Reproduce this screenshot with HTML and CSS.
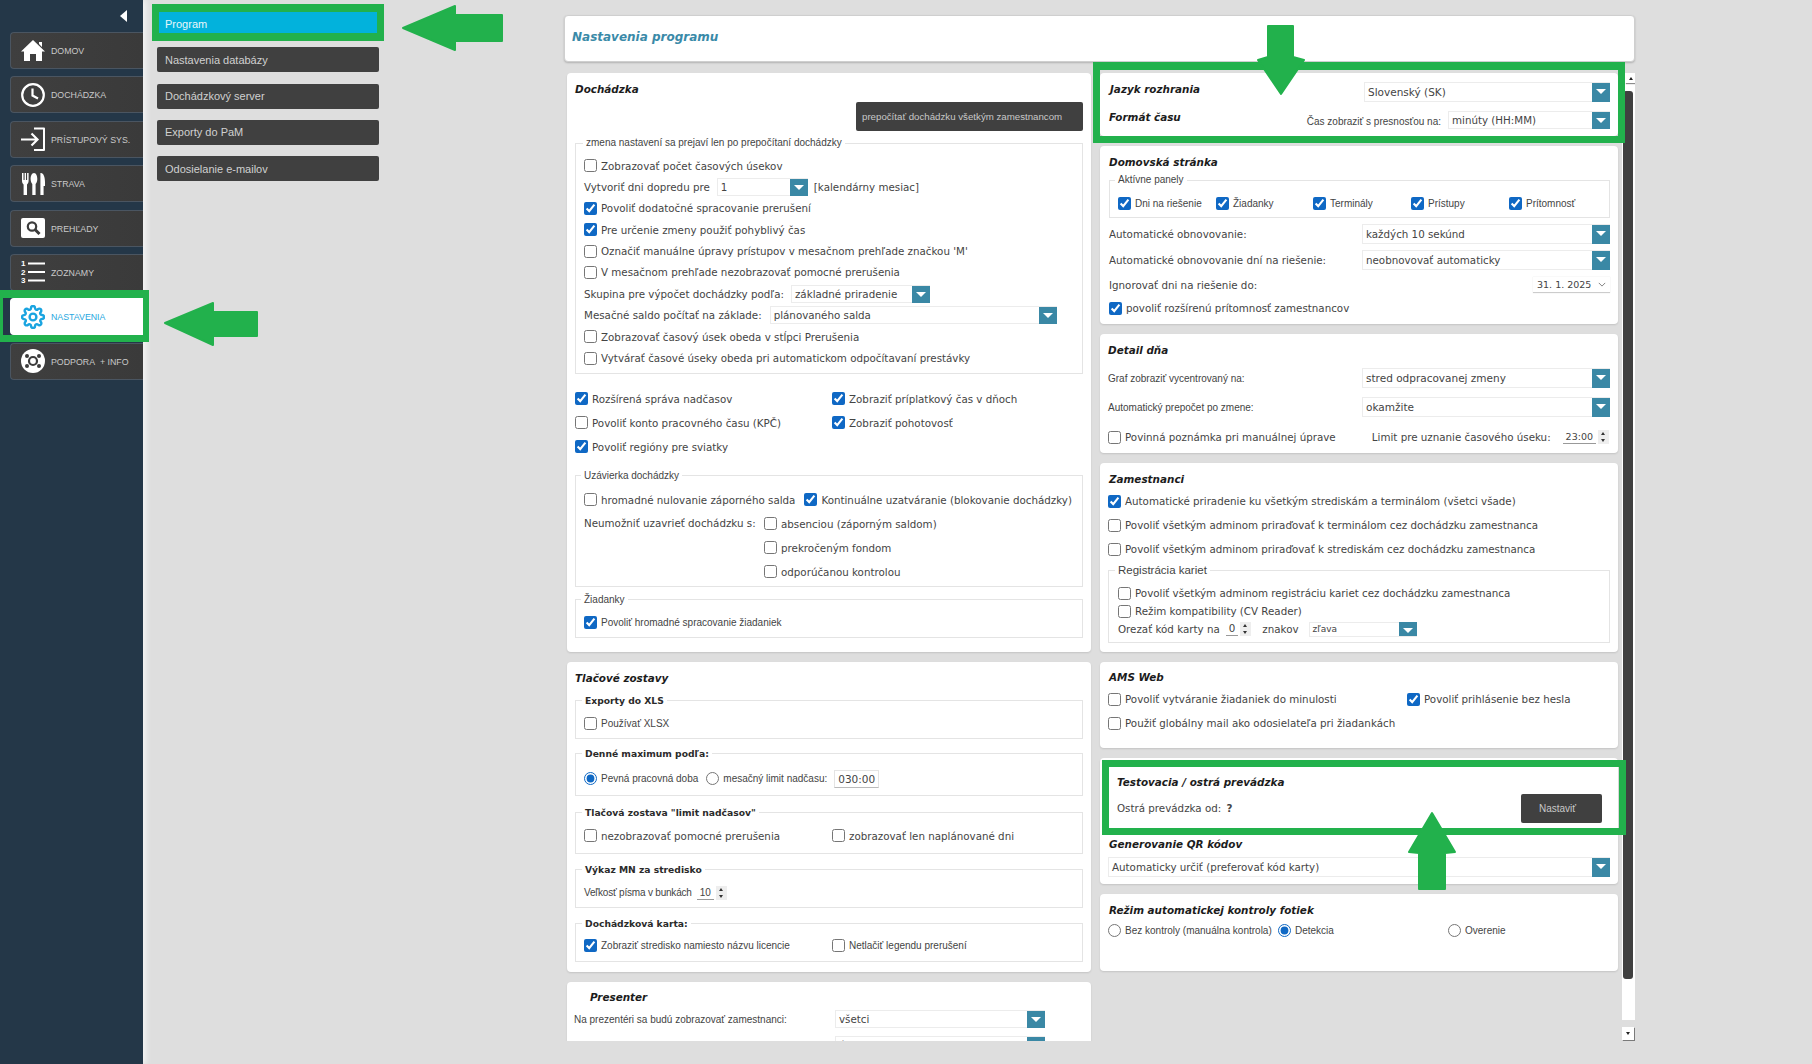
FILE: index.html
```html
<!DOCTYPE html>
<html lang="sk">
<head>
<meta charset="utf-8">
<title>Nastavenia programu</title>
<link rel="stylesheet" href="styles.css">
</head>
<body>
<div class="app">
  <nav class="sidebar">
    <div class="collapse"></div>
    <a class="nav"><svg class="ico" viewBox="0 0 24 24"><path fill="#fff" d="M12 1 24 12.5H21V22H15V15H9V22H3V12.5H0L12 1ZM18 3H21V8L18 5Z"/></svg><span>DOMOV</span></a>
    <a class="nav"><svg class="ico" viewBox="0 0 24 24"><circle cx="12" cy="12" r="10.8" fill="none" stroke="#fff" stroke-width="2.2"/><path d="M11.5 5.5V12.5L17 15.5" fill="none" stroke="#fff" stroke-width="2.2"/></svg><span>DOCHÁDZKA</span></a>
    <a class="nav"><svg class="ico" viewBox="0 0 24 24"><path d="M13 1.5H23V23H13" fill="none" stroke="#fff" stroke-width="2" stroke-linejoin="round"/><path d="M0 12.5H16M10.5 6.5 16.5 12.5 10.5 18.5" fill="none" stroke="#fff" stroke-width="2.2"/></svg><span>PRÍSTUPOVÝ SYS.</span></a>
    <a class="nav"><svg class="ico" viewBox="0 0 24 24"><path fill="#fff" d="M1 1H2.5V8H3.6V1H5V8H6.1V1H7.6V9C7.6 11 6.5 12 6 12.5V23H2.6V12.5C2 12 1 11 1 9ZM13 1C15.2 1 16.3 4 16.3 7 16.3 10 15 11.5 14.6 12V23H11.3V12C11 11.5 9.6 10 9.6 7 9.6 4 10.8 1 13 1ZM20 1C22.5 1 24 5 24 10V14H22.6V23H19.4V1.1Z"/></svg><span>STRAVA</span></a>
    <a class="nav"><svg class="ico" viewBox="0 0 24 24"><rect x="0" y="2" width="24" height="20" rx="2" fill="#fff"/><circle cx="11" cy="10.5" r="4.2" fill="none" stroke="#3c3c3c" stroke-width="2.2"/><path d="M14 13.5 18.5 18" stroke="#3c3c3c" stroke-width="3"/></svg><span>PREHĽADY</span></a>
    <a class="nav"><svg class="ico" viewBox="0 0 24 24"><text class="ico-num" x="0" y="6">1</text><text class="ico-num" x="0" y="14.5">2</text><text class="ico-num" x="0" y="23">3</text><path d="M7 3.5H24M7 12H24M7 20.5H24" stroke="#fff" stroke-width="2.2"/></svg><span>ZOZNAMY</span></a>
    <a class="nav nav-active"><svg class="ico" viewBox="0 0 24 24"><circle cx="12" cy="12" r="3.4" fill="none" stroke="#1aa4e0" stroke-width="2.4"/><path fill="none" stroke="#1aa4e0" stroke-width="2.4" d="M19.4 15a1.65 1.65 0 0 0 .33 1.82l.06.06a2 2 0 0 1 0 2.83 2 2 0 0 1-2.83 0l-.06-.06a1.65 1.65 0 0 0-1.82-.33 1.65 1.65 0 0 0-1 1.51V21a2 2 0 0 1-2 2 2 2 0 0 1-2-2v-.09A1.65 1.65 0 0 0 9 19.4a1.65 1.65 0 0 0-1.82.33l-.06.06a2 2 0 0 1-2.83 0 2 2 0 0 1 0-2.83l.06-.06a1.65 1.65 0 0 0 .33-1.82 1.65 1.65 0 0 0-1.51-1H3a2 2 0 0 1-2-2 2 2 0 0 1 2-2h.09A1.65 1.65 0 0 0 4.6 9a1.65 1.65 0 0 0-.33-1.82l-.06-.06a2 2 0 0 1 0-2.83 2 2 0 0 1 2.83 0l.06.06a1.65 1.65 0 0 0 1.82.33H9a1.65 1.65 0 0 0 1-1.51V3a2 2 0 0 1 2-2 2 2 0 0 1 2 2v.09a1.65 1.65 0 0 0 1 1.51 1.65 1.65 0 0 0 1.82-.33l.06-.06a2 2 0 0 1 2.83 0 2 2 0 0 1 0 2.83l-.06.06a1.65 1.65 0 0 0-.33 1.82V9a1.65 1.65 0 0 0 1.51 1H21a2 2 0 0 1 2 2 2 2 0 0 1-2 2h-.09a1.65 1.65 0 0 0-1.51 1z"/></svg><span>NASTAVENIA</span></a>
    <a class="nav"><svg class="ico" viewBox="0 0 24 24"><circle cx="12" cy="12" r="12" fill="#fff"/><circle cx="12" cy="12" r="4" fill="none" stroke="#3c3c3c" stroke-width="2.2"/><circle cx="6" cy="7" r="2" fill="#3c3c3c"/><circle cx="18" cy="7" r="2" fill="#3c3c3c"/><circle cx="6" cy="17" r="2" fill="#3c3c3c"/><circle cx="18" cy="17" r="2" fill="#3c3c3c"/></svg><span>PODPORA&nbsp; + INFO</span></a>
  </nav>

  <div class="submenu">
    <a class="sub sub-active">Program</a>
    <a class="sub">Nastavenia databázy</a>
    <a class="sub">Dochádzkový server</a>
    <a class="sub">Exporty do PaM</a>
    <a class="sub">Odosielanie e-mailov</a>
  </div>

  <main class="main">
    <header class="pagehead"><h1>Nastavenia programu</h1></header>
    <div class="scroller">
      <div class="col col-left">

        <section class="panel p-doch">
          <h2>Dochádzka</h2>
          <div class="btn-line"><button class="btn btn-recalc">prepočítať dochádzku všetkým zamestnancom</button></div>
          <fieldset class="fs fs-calc">
            <legend class="lg-small">zmena nastavení sa prejaví len po prepočítaní dochádzky</legend>
            <label class="row r21"><input type="checkbox"><span>Zobrazovať počet časových úsekov</span></label>
            <div class="row r21"><span>Vytvoriť dni dopredu pre</span><div class="sel sel-day"><span>1</span><i></i></div><span>[kalendárny mesiac]</span></div>
            <label class="row r21"><input type="checkbox" checked><span>Povoliť dodatočné spracovanie prerušení</span></label>
            <label class="row r21"><input type="checkbox" checked><span>Pre určenie zmeny použiť pohyblivý čas</span></label>
            <label class="row r21"><input type="checkbox"><span>Označiť manuálne úpravy prístupov v mesačnom prehľade značkou 'M'</span></label>
            <label class="row r21"><input type="checkbox"><span>V mesačnom prehľade nezobrazovať pomocné prerušenia</span></label>
            <div class="row r21"><span>Skupina pre výpočet dochádzky podľa:</span><div class="sel sel-group"><span>základné priradenie</span><i></i></div></div>
            <div class="row r21"><span>Mesačné saldo počítať na základe:</span><div class="sel sel-saldo"><span>plánovaného salda</span><i></i></div></div>
            <label class="row r21"><input type="checkbox"><span>Zobrazovať časový úsek obeda v stĺpci Prerušenia</span></label>
            <label class="row r21"><input type="checkbox"><span>Vytvárať časové úseky obeda pri automatickom odpočítavaní prestávky</span></label>
          </fieldset>
          <div class="grid-opts">
            <label class="row r24"><input type="checkbox" checked><span>Rozšírená správa nadčasov</span></label>
            <label class="row r24"><input type="checkbox" checked><span>Zobraziť príplatkový čas v dňoch</span></label>
            <label class="row r24"><input type="checkbox"><span>Povoliť konto pracovného času (KPČ)</span></label>
            <label class="row r24"><input type="checkbox" checked><span>Zobraziť pohotovosť</span></label>
            <label class="row r24"><input type="checkbox" checked><span>Povoliť regióny pre sviatky</span></label>
          </div>
          <fieldset class="fs fs-close">
            <legend>Uzávierka dochádzky</legend>
            <div class="row r24"><label class="row"><input type="checkbox"><span>hromadné nulovanie záporného salda</span></label><label class="row opt-cont"><input type="checkbox" checked><span>Kontinuálne uzatváranie (blokovanie dochádzky)</span></label></div>
            <div class="block-row">
              <div class="block-label">Neumožniť uzavrieť dochádzku s:</div>
              <div>
                <label class="row r24"><input type="checkbox"><span>absenciou (záporným saldom)</span></label>
                <label class="row r24"><input type="checkbox"><span>prekročeným fondom</span></label>
                <label class="row r24"><input type="checkbox"><span>odporúčanou kontrolou</span></label>
              </div>
            </div>
          </fieldset>
          <fieldset class="fs fs-req">
            <legend>Žiadanky</legend>
            <label class="row r20 small"><input type="checkbox" checked><span>Povoliť hromadné spracovanie žiadaniek</span></label>
          </fieldset>
        </section>

        <section class="panel p-print">
          <h2>Tlačové zostavy</h2>
          <fieldset class="fs fs-first">
            <legend class="lg-bold">Exporty do XLS</legend>
            <label class="row r20 small"><input type="checkbox"><span>Používať XLSX</span></label>
          </fieldset>
          <fieldset class="fs fs-tall">
            <legend class="lg-bold">Denné maximum podľa:</legend>
            <div class="row r24 small">
              <label class="row"><input type="radio" name="dm" checked><span>Pevná pracovná doba</span></label>
              <label class="row opt-limit"><input type="radio" name="dm"><span>mesačný limit nadčasu:</span></label>
              <span class="timebox">030:00</span>
            </div>
          </fieldset>
          <fieldset class="fs fs-tall2">
            <legend class="lg-bold">Tlačová zostava "limit nadčasov"</legend>
            <div class="row r24 cols2">
              <label class="row"><input type="checkbox"><span>nezobrazovať pomocné prerušenia</span></label>
              <label class="row"><input type="checkbox"><span>zobrazovať len naplánované dni</span></label>
            </div>
          </fieldset>
          <fieldset class="fs fs-mn">
            <legend class="lg-bold">Výkaz MN za stredisko</legend>
            <div class="row r20 small"><span class="tight">Veľkosť písma v bunkách</span><span class="spin spin-font"><b>10</b><i></i></span></div>
          </fieldset>
          <fieldset class="fs fs-karta">
            <legend class="lg-bold">Dochádzková karta:</legend>
            <div class="row r20 small cols2">
              <label class="row"><input type="checkbox" checked><span>Zobraziť stredisko namiesto názvu licencie</span></label>
              <label class="row"><input type="checkbox"><span>Netlačiť legendu prerušení</span></label>
            </div>
          </fieldset>
        </section>

        <section class="panel p-pres">
          <h2 class="h-indent">Presenter</h2>
          <div class="row r23 pres-row"><span class="pres-label">Na prezentéri sa budú zobrazovať zamestnanci:</span><div class="sel sel-pres"><span>všetci</span><i></i></div></div>
          <div class="row r23 pres-row"><span class="pres-label">Povoliť prezentér pre zamestnancov v termináli:</span><div class="sel sel-pres"><span>áno</span><i></i></div></div>
        </section>
      </div>

      <div class="col col-right">
        <section class="panel p-lang">
          <div class="lang-row lang-1"><h2>Jazyk rozhrania</h2><div class="sel sel-lang"><span>Slovenský (SK)</span><i></i></div></div>
          <div class="lang-row lang-2"><h2>Formát času</h2><span class="small lang-note">Čas zobraziť s presnosťou na:</span><div class="sel sel-time"><span>minúty (HH:MM)</span><i></i></div></div>
        </section>

        <section class="panel p-home">
          <h2>Domovská stránka</h2>
          <fieldset class="fs fs-panels">
            <legend class="lg-small">Aktívne panely</legend>
            <div class="row r20 small panels-row">
              <label class="row"><input type="checkbox" checked><span>Dni na riešenie</span></label>
              <label class="row"><input type="checkbox" checked><span>Žiadanky</span></label>
              <label class="row"><input type="checkbox" checked><span>Terminály</span></label>
              <label class="row"><input type="checkbox" checked><span>Prístupy</span></label>
              <label class="row"><input type="checkbox" checked><span>Prítomnosť</span></label>
            </div>
          </fieldset>
          <div class="row r20 m6 between"><span>Automatické obnovovanie:</span><div class="sel sel-wide"><span>každých 10 sekúnd</span><i></i></div></div>
          <div class="row r20 m6 between"><span>Automatické obnovovanie dní na riešenie:</span><div class="sel sel-wide"><span>neobnovovať automaticky</span><i></i></div></div>
          <div class="row r16 m7 between"><span>Ignorovať dni na riešenie do:</span><div class="datebox"><span>31. 1. 2025</span><svg viewBox="0 0 10 6"><path d="M1 1 5 5 9 1" fill="none" stroke="#666"/></svg></div></div>
          <label class="row r20 m5"><input type="checkbox" checked><span>povoliť rozšírenú prítomnosť zamestnancov</span></label>
        </section>

        <section class="panel p-detail">
          <h2>Detail dňa</h2>
          <div class="row r20 m10 between small"><span>Graf zobraziť vycentrovaný na:</span><div class="sel sel-wide sel-big"><span>stred odpracovanej zmeny</span><i></i></div></div>
          <div class="row r20 m9 between small"><span>Automatický prepočet po zmene:</span><div class="sel sel-wide sel-big"><span>okamžite</span><i></i></div></div>
          <div class="row r16 m12 between">
            <label class="row"><input type="checkbox"><span>Povinná poznámka pri manuálnej úprave</span></label>
            <div class="row"><span>Limit pre uznanie časového úseku:</span><span class="spin spin-limit"><b>23:00</b><i></i></span></div>
          </div>
        </section>

        <section class="panel p-emp">
          <h2>Zamestnanci</h2>
          <label class="row r24 m2"><input type="checkbox" checked><span>Automatické priradenie ku všetkým strediskám a terminálom (všetci všade)</span></label>
          <label class="row r24"><input type="checkbox"><span>Povoliť všetkým adminom priraďovať k terminálom cez dochádzku zamestnanca</span></label>
          <label class="row r24"><input type="checkbox"><span>Povoliť všetkým adminom priraďovať k strediskám cez dochádzku zamestnanca</span></label>
          <fieldset class="fs fs-card">
            <legend class="lg-big">Registrácia kariet</legend>
            <label class="row r18"><input type="checkbox"><span>Povoliť všetkým adminom registráciu kariet cez dochádzku zamestnanca</span></label>
            <label class="row r18"><input type="checkbox"><span>Režim kompatibility (CV Reader)</span></label>
            <div class="row r18"><span>Orezať kód karty na</span><span class="spin spin-card"><b>0</b><i></i></span><span class="znakov">znakov</span><div class="sel sel-side"><span>zľava</span><i></i></div></div>
          </fieldset>
        </section>

        <section class="panel p-ams">
          <h2>AMS Web</h2>
          <div class="row r24 m2 ams-row">
            <label class="row"><input type="checkbox"><span>Povoliť vytváranie žiadaniek do minulosti</span></label>
            <label class="row"><input type="checkbox" checked><span>Povoliť prihlásenie bez hesla</span></label>
          </div>
          <label class="row r24"><input type="checkbox"><span>Použiť globálny mail ako odosielateľa pri žiadankách</span></label>
        </section>

        <section class="panel p-test">
          <div class="test-inner">
            <h2>Testovacia / ostrá prevádzka</h2>
            <div class="row test-row"><span>Ostrá prevádzka od: <b class="q">?</b></span><button class="btn btn-set">Nastaviť</button></div>
          </div>
          <h2 class="h-qr">Generovanie QR kódov</h2>
          <div class="sel sel-qr"><span>Automaticky určiť (preferovať kód karty)</span><i></i></div>
        </section>

        <section class="panel p-photo">
          <h2>Režim automatickej kontroly fotiek</h2>
          <div class="row r20 m2 small photo-row">
            <label class="row"><input type="radio" name="ph"><span>Bez kontroly (manuálna kontrola)</span></label>
            <label class="row"><input type="radio" name="ph" checked><span>Detekcia</span></label>
            <label class="row"><input type="radio" name="ph"><span>Overenie</span></label>
          </div>
        </section>
      </div>

      <div class="scrollbar">
        <div class="sb-track">
          <div class="sb-up"></div>
          <div class="sb-thumb"></div>
        </div>
        <div class="sb-down"></div>
      </div>
    </div>
  </main>

  <svg class="annot" viewBox="0 0 1812 1064" aria-hidden="true">
    <path fill-rule="evenodd" d="M152 4H384V41H152ZM159 12V33H377V12Z"/>
    <path fill-rule="evenodd" d="M0 290H149V342H0ZM3 298V335H143V298Z"/>
    <path fill-rule="evenodd" d="M1093 62H1625V143H1093ZM1100 70V136H1618V70Z"/>
    <path fill-rule="evenodd" d="M1102 760H1626V835H1102ZM1109 767V828H1619V767Z"/>
    <polygon class="arrow" points="403,28 455,6 455,15 502,15 502,41 455,41 455,50"/>
    <polygon class="arrow" points="165,323 213,303 213,312 257,312 257,336 213,336 213,345"/>
    <polygon class="arrow" points="1268,26 1293,26 1293,57 1304,60 1281,94 1258,60 1268,57"/>
    <polygon class="arrow" points="1432,813 1455,852 1445,853 1445,889 1419,889 1419,853 1409,852"/>
  </svg>
</div>
</body>
</html>
```

FILE: styles.css
```css
* { box-sizing: border-box; }
html, body { margin: 0; height: 100%; }
body {
  background: #dedede;
  font: 10.3px/1.2 "DejaVu Sans", sans-serif;
  color: #444;
  overflow: hidden;
}
.app { position: relative; display: flex; width: 1812px; height: 1064px; }

/* sidebar */
.sidebar {
  width: 143px; flex: none;
  background: #243748;
  padding: 32px 0 0 10px;
  display: flex; flex-direction: column; gap: 7.4px;
  position: relative;
  box-shadow: 3px 0 6px rgba(255,255,255,.7);
}
.collapse {
  position: absolute; left: 120px; top: 10px;
  width: 0; height: 0;
  border-top: 6px solid transparent;
  border-bottom: 6px solid transparent;
  border-right: 7px solid #fff;
}
.nav {
  display: flex; align-items: center;
  height: 37px; padding-left: 10px;
  background: linear-gradient(90deg, #3f3f3f, #3a3a3a);
  border: 1px solid #4a5561; border-right: 0;
  border-radius: 4px 0 0 4px;
  color: #c9c9c9;
  font: 8.8px "Liberation Sans", sans-serif;
  white-space: nowrap;
}
.nav span { padding-top: 1px; }
.ico { width: 24px; height: 24px; flex: none; margin-right: 6px; }
.ico-num { font: bold 8px "Liberation Sans", sans-serif; fill: #fff; }
.nav-active { background: #fff; color: #27a7e0; border-color: #fff; }

/* submenu */
.submenu {
  width: 222px; flex: none; margin-left: 14px; padding-top: 11px;
  display: flex; flex-direction: column; gap: 11.25px;
}
.sub {
  display: flex; align-items: center;
  height: 25px; padding-left: 8px;
  background: #404040; color: #d0d0d0;
  border-radius: 2px;
  font: 11px "Liberation Sans", sans-serif;
}
.sub-active { background: #02b2dc; color: #e8f7fb; }

/* main */
.main {
  width: 1071px; flex: none; margin-left: 185px;
  padding: 15px 0 23px;
  display: flex; flex-direction: column;
}
.pagehead {
  height: 47px; flex: none; padding: 14px 7px 0;
  background: #fff;
  border: 1px solid #cfcfcf; border-radius: 4px;
  box-shadow: 0 1px 2px rgba(0,0,0,.2);
}
h1 {
  margin: 0;
  font: italic bold 12px "DejaVu Sans", sans-serif;
  color: #3a8aa8;
}
h2 {
  margin: 0; height: 16px;
  font: italic bold 10.4px/16px "DejaVu Sans", sans-serif;
  color: #1c1c1c;
  white-space: nowrap;
}
.scroller {
  flex: 1; min-height: 0; margin-top: 11px; padding-left: 3px;
  display: flex; align-items: flex-start; overflow: hidden;
}
.col { display: flex; flex-direction: column; gap: 10px; flex: none; }
.col-left { width: 524px; }
.col-right { width: 518px; margin-left: 9px; }

.panel {
  background: #fff; border-radius: 4px;
  box-shadow: 0 1px 2px rgba(0,0,0,.12);
  padding: 8px;
}

/* rows */
.row { display: flex; align-items: center; white-space: nowrap; }
.r16 { height: 16px; } .r18 { height: 18px; } .r20 { height: 20px; }
.r21 { height: 21.4px; } .r23 { height: 23px; } .r24 { height: 24px; }
.m2 { margin-top: 2px; } .m5 { margin-top: 5px; } .m6 { margin-top: 6px; }
.m7 { margin-top: 7px; } .m9 { margin-top: 9px; } .m10 { margin-top: 10px; }
.m12 { margin-top: 12px; }
.between { justify-content: space-between; }
.small { font: 10px "Liberation Sans", sans-serif; }
.tight { letter-spacing: -.2px; }
input[type=checkbox], input[type=radio] {
  width: 13px; height: 13px; margin: 0 4px 0 0; flex: none;
  accent-color: #0f68c4;
}

/* fieldsets */
.fs {
  margin: 9px 0 0; padding: 7px 8px 4px;
  border: 1px solid #e4e4e4; min-width: 0;
}
.fs legend {
  padding: 0 3px; margin-left: -3px;
  font: 10px/12px "Liberation Sans", sans-serif; color: #444;
}
.fs .lg-bold { font: bold 9.2px/12px "DejaVu Sans", sans-serif; color: #2b2b2b; margin-left: -2px; }
.fs .lg-big { font-size: 11.5px; }
.fs-calc legend { margin-left: -1px; }

.p-doch { padding-bottom: 14px; }
.btn-line { display: flex; justify-content: flex-end; margin-top: 5px; }
.btn {
  border: 0; border-radius: 2px;
  background: #404040; color: #c8c8c8;
  font: 9.7px "Liberation Sans", sans-serif;
}
.btn-recalc { width: 227px; height: 29px; padding: 0 0 0 6px; text-align: left; }
.fs-calc { margin-top: 6px; padding: 6px 8px 4px; }
.grid-opts { display: grid; grid-template-columns: 257px 1fr; margin-top: 13px; }
.fs-close { margin-top: 11px; padding: 6px 8px 2px; }
.fs-req { margin-top: 7px; }
.opt-cont { margin-left: 9px; }
.block-row { display: flex; }
.block-label { width: 180px; line-height: 22px; }

.p-print { padding-bottom: 10px; }
.fs-first { margin-top: 9px; }
.fs-tall { padding-top: 7px; }
.fs-tall2 { margin-top: 11px; padding-top: 5px; padding-bottom: 5px; }
.fs-mn { margin-top: 10px; }
.fs-karta { margin-top: 10px; padding-top: 6px; padding-bottom: 5px; }
.opt-limit { margin-left: 8px; }
.timebox {
  width: 45px; height: 18px; margin-left: 7px;
  border: 1px solid #e4e4e4; border-bottom-color: #bbb;
  text-align: center;
  font: 10.5px/16px "DejaVu Sans", sans-serif;
}
.cols2 { display: grid; grid-template-columns: 248px 1fr; }

.p-pres { padding: 7px 8px 30px 7px; }
.h-indent { margin: 0 0 1px 16px; }
.pres-row { margin-top: 3px; }
.pres-label { width: 261px; font: 10px "Liberation Sans", sans-serif; }

/* dropdown */
.sel {
  display: flex; align-items: center; flex: none;
  height: 18px; padding-left: 3px;
  border: 1px solid #ececec;
  background: #fff;
  white-space: nowrap;
}
.sel span { flex: 1; }
.sel i {
  position: relative; display: block; flex: none;
  width: 18px; height: calc(100% + 1px); margin: -1px -1px -1px 0;
  background: #3a88a5;
}
.sel i::after {
  content: ""; position: absolute; left: 4px; top: 6px;
  border-left: 5px solid transparent;
  border-right: 5px solid transparent;
  border-top: 5px solid #fff;
}
.sel-day { width: 91px; margin: 0 6px 0 7px; }
.sel-group { width: 139px; margin-left: 7px; }
.sel-saldo { width: 287px; margin-left: 8px; }
.sel-pres { width: 210px; }
.sel-lang { width: 246px; height: 20px; font-size: 10.5px; }
.sel-time { width: 162px; margin-left: 7px; }
.sel-wide { width: 248px; height: 20px; }
.sel-big { font: 10.5px "DejaVu Sans", sans-serif; }
.sel-side { width: 108px; margin-left: 10px; height: 15px; font-size: 9px; }
.sel-qr { width: 502px; height: 20px; margin-top: 5px; }

/* spinner */
.spin { display: inline-flex; align-items: center; height: 16px; }
.spin b { font-weight: normal; border-bottom: 1px solid #999; padding: 0 3px; line-height: 13px; }
.spin i {
  position: relative; display: block; width: 11px; height: 14px; margin-left: 2px;
  background: #eee;
}
.spin i::before, .spin i::after {
  content: ""; position: absolute; left: 3px;
  border-left: 2.5px solid transparent; border-right: 2.5px solid transparent;
}
.spin i::before { top: 2px; border-bottom: 3px solid #333; }
.spin i::after { bottom: 2px; border-top: 3px solid #333; }
.spin-font { margin-left: 5px; }
.spin-limit { margin-left: 12px; margin-right: 1px; font-size: 9.5px; }
.spin-card { margin-left: 6px; }
.znakov { margin-left: 11px; }

.datebox {
  display: flex; align-items: center; justify-content: space-between;
  width: 77px; height: 16px; padding: 0 4px;
  border-bottom: 1px solid #ccc; font-size: 9.5px;
  box-shadow: 0 0 1px rgba(0,0,0,.15);
}
.datebox svg { width: 8px; height: 5px; }

/* right panels */
.p-lang { padding: 10px 8px 7px 10px; }
.lang-row { display: flex; align-items: flex-start; }
.lang-row h2 { height: 14px; line-height: 14px; margin-top: -1px; }
.lang-1 .sel { margin-left: auto; margin-top: -1px; }
.lang-2 { margin-top: 9px; margin-left: -1px; }
.lang-note { margin-left: auto; padding-top: 5px; }
.p-home { padding: 8px 8px 6px 9px; }
.fs-panels { margin-top: 4px; }
.panels-row { display: grid; grid-template-columns: 98px 97px 98px 98px 1fr; }
.p-emp { padding-bottom: 9px; }
.p-emp h2, .p-ams h2, .p-photo h2 { margin-left: 1px; }
.fs-card { margin-top: 3px; padding: 8px 9px 4px; }
.p-ams { padding: 7px 8px 13px; }
.ams-row { display: grid; grid-template-columns: 299px 1fr; }

.p-test { padding: 16px 8px 7px; }
.test-inner { padding-left: 9px; }
.test-row { margin-top: 4px; justify-content: space-between; padding-right: 8px; }
.q { font-weight: bold; margin-left: 2px; }
.btn-set { width: 81px; height: 29px; padding-right: 14px; font-size: 10px; }
.h-qr { margin-top: 13px; margin-left: 1px; }
.p-photo { padding-bottom: 31px; }
.photo-row { display: grid; grid-template-columns: 170px 170px 1fr; }

/* scrollbar */
.scrollbar {
  width: 13px; flex: none; margin-left: 4px;
  height: 100%;
  display: flex; flex-direction: column;
}
.sb-track { height: 947px; background: #fff; padding: 0 2px 0 1px; }
.sb-up, .sb-down {
  position: relative; width: 12px; background: #fff;
  box-shadow: 1px 1px 1px rgba(0,0,0,.45);
}
.sb-up { height: 10px; margin-left: 2px; }
.sb-down { height: 13px; margin-top: 7px; }
.sb-up::after, .sb-down::after {
  content: ""; position: absolute; left: 4px; top: 4px;
  border-left: 2.5px solid transparent; border-right: 2.5px solid transparent;
}
.sb-up::after { border-bottom: 3px solid #222; }
.sb-down::after { top: 5px; border-top: 3px solid #222; }
.sb-thumb { height: 888px; margin-top: 8px; background: #404040; border-radius: 3px; }

/* annotations laid over the screenshot */
.annot {
  position: absolute; left: 0; top: 0; width: 1812px; height: 1064px;
  fill: #22b14c; pointer-events: none;
}
.arrow { stroke: #22b14c; stroke-width: 2; stroke-linejoin: round; }
```
